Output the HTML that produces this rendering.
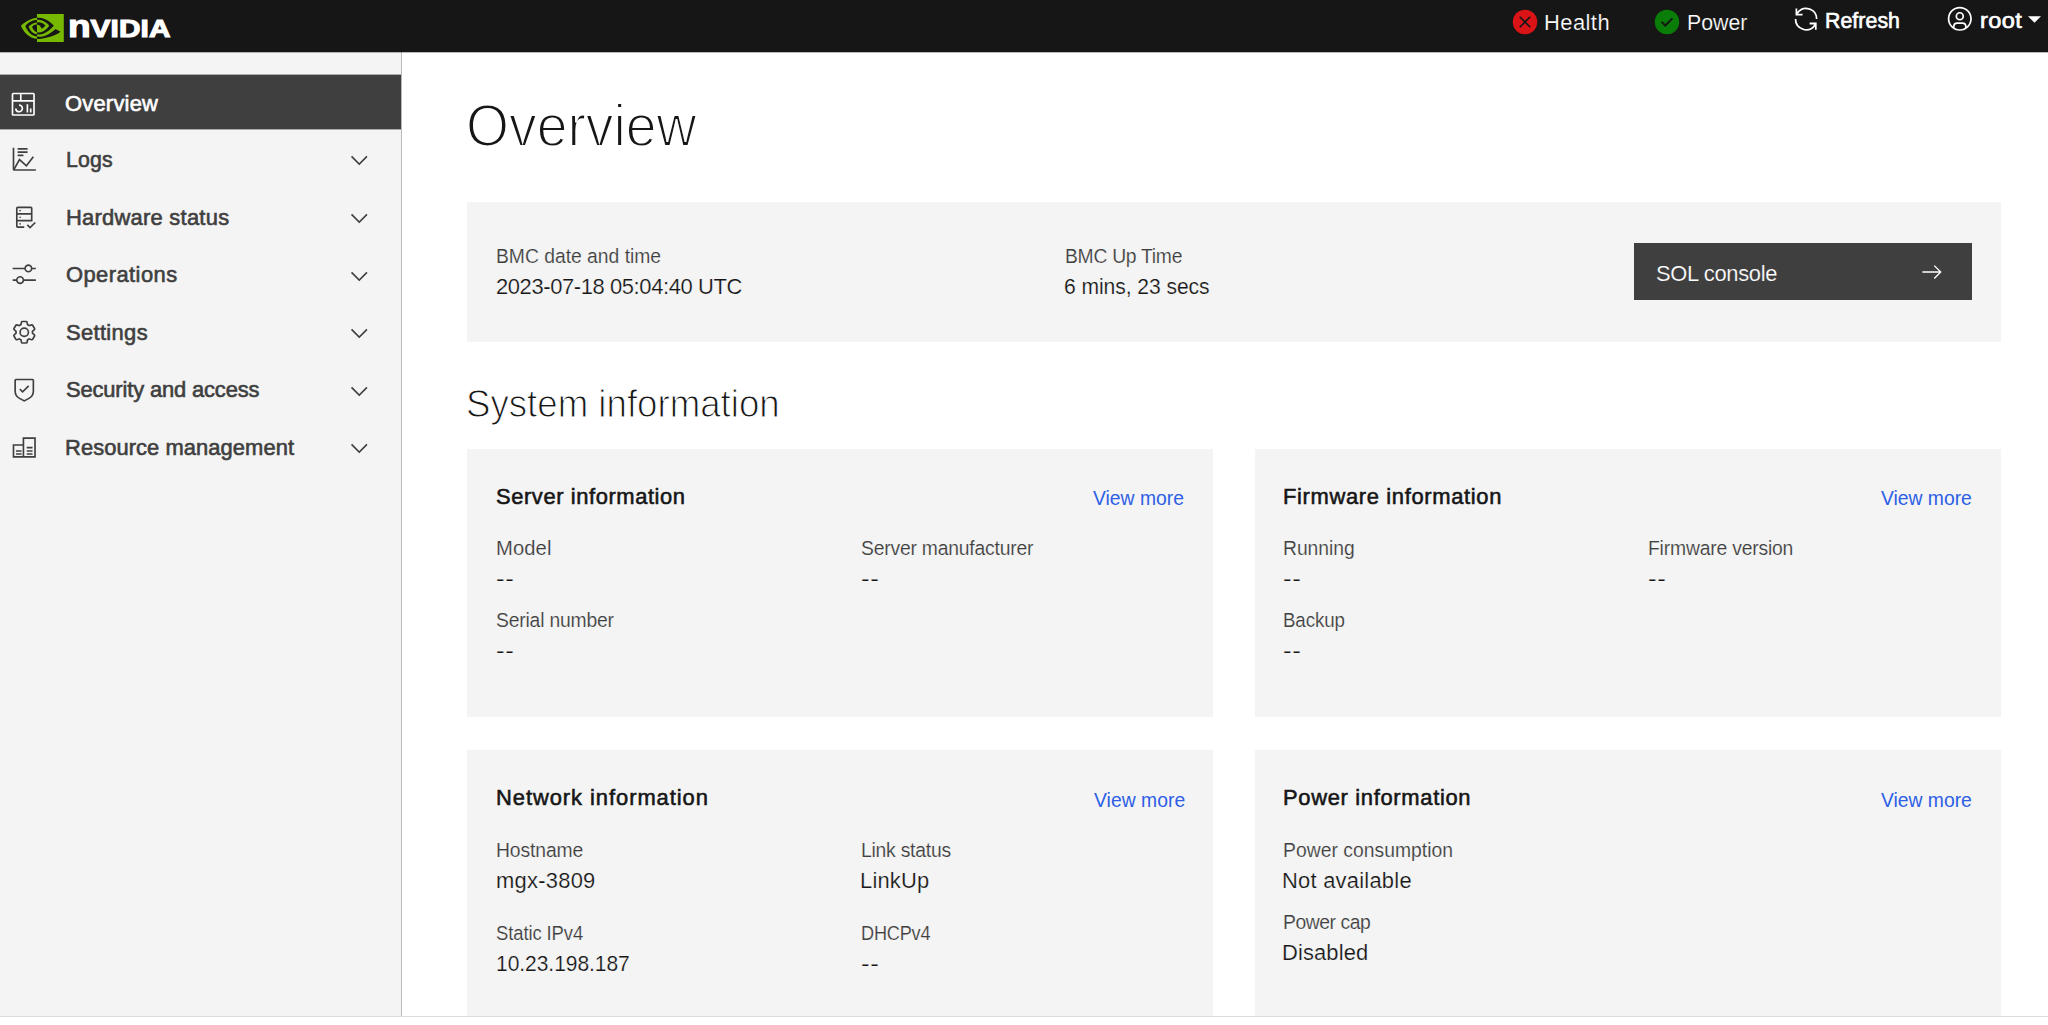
<!DOCTYPE html>
<html lang="en">
<head>
<meta charset="utf-8">
<title>Overview</title>
<style>
*{box-sizing:border-box;margin:0;padding:0}
html,body{width:2048px;height:1025px;overflow:hidden;background:#fff}
body{font-family:"Liberation Sans",sans-serif;color:#161616;font-size:21.2px;position:relative}
a{text-decoration:none;color:inherit}
ul{list-style:none}
h1,h2,h3,dt,dd{font-weight:normal}
.abs,.t{position:absolute;white-space:nowrap;line-height:1;transform-origin:0 0}
svg{display:block;position:absolute;overflow:visible}
#hdr{position:absolute;left:0;top:0;width:2048px;height:52px;background:#161616;color:#fff;z-index:1;box-shadow:0 1px 0 rgba(22,22,22,.3)}
#nav{position:absolute;left:0;top:52px;width:402px;height:964px;background:#f4f4f4;border-right:1px solid #b8b8b8}
#nav li{position:absolute;left:0;width:401px;height:54px;color:#3f3f3f}
#nav li.on{background:#3f3f3f;color:#fff;box-shadow:0 -1px 0 rgba(63,63,63,.4),0 1px 0 rgba(63,63,63,.4)}
#nav li svg.ic{width:26.5px;height:26.5px;fill:currentColor}
#nav li svg.ch{left:345.8px;width:26.5px;height:26.5px;fill:currentColor}
#main{position:absolute;left:402px;top:52px;width:1646px;height:964px;background:#fff}
.card{position:absolute;background:#f4f4f4}
#sol_btn{background:#3f3f3f;color:#fff}
#foot{position:absolute;left:0;top:1016px;width:2048px;height:9px;background:#fff;border-top:1px solid #dcdcdc}
#brand{left:67.6px;top:13.5px;font-size:24.6px;line-height:30px;font-weight:bold;color:#fff;-webkit-text-stroke:1.1px #fff;transform:scaleX(1.21);letter-spacing:0.1px}
.bn{display:inline-block;font-size:32px;line-height:0;transform:scaleX(.96);transform-origin:0 0;margin-right:-1px}
.k-body{font-size:21.5px;line-height:26px;color:#161616;-webkit-text-stroke:0.2px #f4f4f4;transform:scaleX(1.02)}
.k-lbl{font-size:19.5px;line-height:24px;color:#3f3f3f;-webkit-text-stroke:0.15px #f4f4f4;transform:scaleX(0.99)}
.k-nav{font-size:21.5px;line-height:26px;color:#3f3f3f;-webkit-text-stroke:0.6px #3f3f3f;transform:scaleX(1.02)}
.k-navon{font-size:21.5px;line-height:26px;color:#ffffff;-webkit-text-stroke:0.6px #ffffff;transform:scaleX(1.02)}
.k-hdr{font-size:21.5px;line-height:26px;color:#ffffff;-webkit-text-stroke:0.2px #161616;transform:scaleX(1.02)}
.k-hdrb{font-size:21.5px;line-height:26px;color:#ffffff;-webkit-text-stroke:0.65px #ffffff;transform:scaleX(1.02)}
.k-ttl{font-size:21.5px;line-height:26px;color:#161616;-webkit-text-stroke:0.55px #161616;transform:scaleX(1.02)}
.k-lnk{font-size:19.5px;line-height:24px;color:#2d60e5;transform:scaleX(0.99)}
.k-h1{font-size:60px;line-height:69px;color:#161616;-webkit-text-stroke:1.9px #ffffff}
.k-h2{font-size:39.3px;line-height:46px;color:#161616;-webkit-text-stroke:1.05px #ffffff}
.k-dash{font-size:21.5px;line-height:26px;color:#161616;-webkit-text-stroke:0.25px #f4f4f4;transform:scaleX(1.2)}
.k-sol{font-size:21.5px;line-height:26px;color:#ffffff;-webkit-text-stroke:0.2px #3f3f3f;transform:scaleX(1.02)}
</style>
</head>
<body>

<header id="hdr">
  <svg id="logo" viewBox="0 4.063 24 15.874" style="left:20.8px;top:13.7px;width:42.8px;height:28.1px" preserveAspectRatio="none"><path fill="#76b900" d="M8.948 8.798v-1.43a6.7 6.7 0 0 1 .424-.018c3.922-.124 6.493 3.374 6.493 3.374s-2.774 3.851-5.75 3.851c-.398 0-.787-.062-1.158-.185v-4.346c1.528.185 1.837.857 2.747 2.385l2.04-1.714s-1.492-1.952-4-1.952a6.016 6.016 0 0 0-.796.035m0-4.735v2.138l.424-.027c5.45-.185 9.01 4.47 9.01 4.47s-4.08 4.964-8.33 4.964c-.37 0-.733-.035-1.095-.097v1.325c.3.035.61.062.91.062 3.957 0 6.82-2.023 9.593-4.408.459.371 2.34 1.263 2.73 1.652-2.633 2.208-8.772 3.984-12.253 3.984-.335 0-.653-.018-.971-.053v1.864H24V4.063zm0 10.326v1.131c-3.657-.654-4.673-4.46-4.673-4.46s1.758-1.944 4.673-2.262v1.237H8.94c-1.528-.186-2.73 1.245-2.73 1.245s.68 2.412 2.739 3.11M2.456 10.9s2.164-3.197 6.5-3.533V6.201C4.153 6.59 0 10.653 0 10.653s2.35 6.802 8.948 7.42v-1.237c-4.84-.6-6.492-5.936-6.492-5.936z"/></svg>
  <span id="brand" class="t" aria-label="NVIDIA"><span class="bn">n</span>VIDIA</span>
  <svg viewBox="0 0 32 32" style="left:1511.3px;top:7.5px;width:28px;height:28px"><circle cx="16" cy="16" r="14" fill="#da1416"/><path d="M10 10l12 12M22 10L10 22" fill="none" stroke="#161616" stroke-width="1.900"/></svg>
  <span id="health" class="t k-hdr" style="left:1544.27px;top:10px;letter-spacing:0.43px">Health</span>
  <svg viewBox="0 0 32 32" style="left:1653.3px;top:7.5px;width:28px;height:28px"><circle cx="16" cy="16" r="13" fill="#161616"/><path fill="#0a7d08" d="M16 2a14 14 0 1014 14A14 14 0 0016 2zm-2 19.590l-5-5L10.590 15 14 18.410 21.410 11l1.596 1.586z"/></svg>
  <span id="power" class="t k-hdr" style="left:1687.04px;top:10px;letter-spacing:-0.02px;transform:scaleX(0.9934)">Power</span>
  <svg viewBox="0 0 32 32" style="left:1792.1px;top:5px;width:28.2px;height:28.2px" fill="#fff"><path d="M12 10H6.780A11 11 0 0127 16h2A13 13 0 006 7.680V4H4v8h8zM20 22h5.220A11 11 0 015 16H3a13 13 0 0023 8.320V28h2v-8h-8z"/></svg>
  <span id="refresh" class="t k-hdrb" style="left:1825.33px;top:8px;letter-spacing:0.06px;transform:scaleX(0.9906)">Refresh</span>
  <svg viewBox="0 0 32 32" style="left:1945.7px;top:5.1px;width:27.6px;height:27.6px" fill="#fff"><path d="M16 8a5 5 0 105 5 5 5 0 00-5-5zm0 8a3 3 0 113-3 3.003 3.003 0 01-3 3z"/><path d="M16 2a14 14 0 1014 14A14.016 14.016 0 0016 2zm-6 24.377V25a3.003 3.003 0 013-3h6a3.003 3.003 0 013 3v1.377a11.899 11.899 0 01-12 0zm13.992-1.451A5.002 5.002 0 0019 20h-6a5.002 5.002 0 00-4.992 4.926 12 12 0 1115.985 0z"/></svg>
  <span id="root" class="t k-hdrb" style="left:1979.68px;top:8px;letter-spacing:0.38px;transform:scaleX(1.0946)">root</span>
  <svg viewBox="0 0 12 6" style="left:2027.7px;top:16.2px;width:13px;height:6.8px" fill="#fff"><path d="M0 0h12L6 6z"/></svg>
</header>

<nav id="nav">
  <ul>
    <li class="on" style="top:23px">
      <svg class="ic" style="left:9.95px;top:15.60px" viewBox="0 0 32 32"><path d="M24 21h2v5h-2zM20 16h2v10h-2zM11 26a5.006 5.006 0 01-5-5h2a3 3 0 103-3v-2a5 5 0 010 10z"/><path d="M28 2H4a2.002 2.002 0 00-2 2v24a2.002 2.002 0 002 2h24a2.003 2.003 0 002-2V4a2.002 2.002 0 00-2-2zm0 9H14V4h14zM12 4v7H4V4zM4 28V13h24.001l.001 15z"/></svg>
      <a id="n0" class="t k-navon" style="left:64.54px;top:16px;letter-spacing:0.21px">Overview</a>
    </li>
    <li style="top:80px">
      <svg class="ic" style="left:11.25px;top:14.15px" viewBox="0 0 32 32"><path d="M4 2H2v26a2 2 0 002 2h26v-2H4z"/><path d="M8 2.400h12v2H8zM8 6.400h12v2H8zM8 10.400h7v2H8z"/><path fill="none" stroke="currentColor" stroke-width="2" d="M3.500 28.500L10.200 16.400l8.400 7.600L27 13"/></svg>
      <a id="n1" class="t k-nav" style="left:66.31px;top:15px;letter-spacing:0.16px;transform:scaleX(0.99)">Logs</a>
      <svg class="ch" style="top:15.40px" viewBox="0 0 32 32"><path d="M16 22L6 12l1.400-1.400 8.600 8.600 8.600-8.600L26 12z"/></svg>
    </li>
    <li style="top:138px">
      <svg class="ic" style="left:11.25px;top:13.75px" viewBox="0 0 32 32"><path d="M23 27.180l-2.590-2.590L19 26l4 4 7-7-1.410-1.410L23 27.180z"/><circle cx="11" cy="8" r="1"/><circle cx="11" cy="16" r="1"/><circle cx="11" cy="24" r="1"/><path d="M24 3H8a2 2 0 00-2 2v22a2 2 0 002 2h8v-2H8v-6h18V5a2 2 0 00-2-2zm0 16H8v-6h16zm0-8H8V5h16z"/></svg>
      <a id="n2" class="t k-nav" style="left:65.92px;top:15px;letter-spacing:0.24px">Hardware status</a>
      <svg class="ch" style="top:15.00px" viewBox="0 0 32 32"><path d="M16 22L6 12l1.400-1.400 8.600 8.600 8.600-8.600L26 12z"/></svg>
    </li>
    <li style="top:195px">
      <svg class="ic" style="left:11.25px;top:14.35px" viewBox="0 0 32 32"><path d="M30 8h-4.100c-.5-2.300-2.500-4-4.900-4s-4.400 1.700-4.900 4H2v2h14.100c.5 2.300 2.500 4 4.900 4s4.400-1.700 4.900-4H30V8zm-9 4c-1.700 0-3-1.300-3-3s1.300-3 3-3 3 1.300 3 3-1.300 3-3 3zM2 24h4.100c.5 2.300 2.500 4 4.900 4s4.400-1.700 4.900-4H30v-2H15.900c-.5-2.300-2.500-4-4.900-4s-4.400 1.700-4.900 4H2v2zm9-4c1.700 0 3 1.300 3 3s-1.300 3-3 3-3-1.300-3-3 1.300-3 3-3z"/></svg>
      <a id="n3" class="t k-nav" style="left:66.13px;top:15px;letter-spacing:0.42px">Operations</a>
      <svg class="ch" style="top:15.60px" viewBox="0 0 32 32"><path d="M16 22L6 12l1.400-1.400 8.600 8.600 8.600-8.600L26 12z"/></svg>
    </li>
    <li style="top:253px">
      <svg class="ic" style="left:11.25px;top:13.95px" viewBox="0 0 32 32"><path d="M27 16.760c0-.25 0-.5 0-.76s0-.51 0-.77l1.920-1.680A2 2 0 0029.300 11l-2.360-4a2 2 0 00-1.730-1 2 2 0 00-.64.100l-2.430.82a11.350 11.350 0 00-1.310-.75l-.51-2.520a2 2 0 00-2-1.610h-4.680a2 2 0 00-2 1.610l-.51 2.520a11.480 11.480 0 00-1.320.75l-2.380-.86A2 2 0 006.790 6a2 2 0 00-1.730 1L2.700 11a2 2 0 00.41 2.510L5 15.240c0 .25 0 .5 0 .76s0 .51 0 .77l-1.890 1.680A2 2 0 002.700 21l2.360 4a2 2 0 001.730 1 2 2 0 00.64-.1l2.430-.82a11.350 11.350 0 001.310.75l.51 2.520a2 2 0 002 1.610h4.720a2 2 0 002-1.610l.51-2.520a11.480 11.480 0 001.320-.75l2.420.82a2 2 0 00.64.100 2 2 0 001.730-1l2.280-4a2 2 0 00-.41-2.510zM25.210 24l-3.430-1.160a8.860 8.860 0 01-2.710 1.570L18.360 28h-4.720l-.71-3.550a9.360 9.360 0 01-2.700-1.570L6.790 24l-2.360-4 2.720-2.400a8.900 8.900 0 010-3.130L4.430 12l2.360-4 3.430 1.160a8.860 8.860 0 012.710-1.570L13.640 4h4.720l.71 3.550a9.360 9.360 0 012.700 1.570L25.210 8l2.360 4-2.720 2.400a8.900 8.900 0 010 3.130L27.570 20z"/><path d="M16 22a6 6 0 116-6 5.940 5.940 0 01-6 6zm0-10a3.910 3.910 0 00-4 4 3.910 3.910 0 004 4 3.910 3.910 0 004-4 3.910 3.910 0 00-4-4z"/></svg>
      <a id="n4" class="t k-nav" style="left:66.11px;top:15px;letter-spacing:0.33px">Settings</a>
      <svg class="ch" style="top:15.20px" viewBox="0 0 32 32"><path d="M16 22L6 12l1.400-1.400 8.600 8.600 8.600-8.600L26 12z"/></svg>
    </li>
    <li style="top:311px">
      <svg class="ic" style="left:11.25px;top:13.55px" viewBox="0 0 32 32"><path d="M14 16.590L11.410 14 10 15.410l4 4 8-8L20.590 10 14 16.590z"/><path d="M16 30l-6.176-3.293A10.982 10.982 0 014 17V4a2.002 2.002 0 012-2h20a2.002 2.002 0 012 2v13a10.982 10.982 0 01-5.824 9.707zM6 4v13a8.985 8.985 0 004.766 7.942L16 27.733l5.234-2.790A8.985 8.985 0 0026 17V4z"/></svg>
      <a id="n5" class="t k-nav" style="left:66.11px;top:14px;letter-spacing:-0.15px">Security and access</a>
      <svg class="ch" style="top:14.80px" viewBox="0 0 32 32"><path d="M16 22L6 12l1.400-1.400 8.600 8.600 8.600-8.600L26 12z"/></svg>
    </li>
    <li style="top:368px">
      <svg class="ic" style="left:11.25px;top:14.15px" viewBox="0 0 32 32"><path fill="none" stroke="currentColor" stroke-width="2" d="M15 27.600V5h14v22.600zM15 13.300H3v14.300h12"/><path d="M6 19.500h6.800v2H6zM6 23.200h6.800v2H6zM19 15.500h7v2h-7zM19 19.500h7v2h-7zM19 23.200h7v2h-7z"/></svg>
      <a id="n6" class="t k-nav" style="left:65.09px;top:15px;letter-spacing:0.06px">Resource management</a>
      <svg class="ch" style="top:15.40px" viewBox="0 0 32 32"><path d="M16 22L6 12l1.400-1.400 8.600 8.600 8.600-8.600L26 12z"/></svg>
    </li>
  </ul>
</nav>

<main id="main">
  <h1 id="h1" class="t k-h1" style="left:64.47px;top:39px;transform:scaleX(0.9214)">Overview</h1>
  <section class="card" id="c_top" style="left:65px;top:150px;width:1533.5px;height:139.7px">
    <dl>
      <dt id="bl1" class="t k-lbl" style="left:28.89px;top:42px;letter-spacing:-0.01px">BMC date and time</dt>
      <dd id="bv1" class="t k-body" style="left:28.59px;top:72px;letter-spacing:-0.38px">2023-07-18 05:04:40 UTC</dd>
      <dt id="bl2" class="t k-lbl" style="left:597.89px;top:42px;letter-spacing:-0.28px">BMC Up Time</dt>
      <dd id="bv2" class="t k-body" style="left:597.03px;top:72px;letter-spacing:-0.07px;transform:scaleX(0.9811)">6 mins, 23 secs</dd>
    </dl>
    <a id="sol_btn" class="abs" style="left:1167px;top:41px;width:338px;height:57.2px">
      <span id="sol" class="t k-sol" style="left:21.94px;top:18px;letter-spacing:-0.32px">SOL console</span>
      <svg id="arrow" viewBox="0 0 16 16" style="left:286.8px;top:17.8px;width:22px;height:22px" fill="#fff"><path d="M9.300 3.700L13.100 7.500H1v1h12.100l-3.800 3.800.7.700 5-5-5-5z"/></svg>
    </a>
  </section>
  <h2 id="h2" class="t k-h2" style="left:64.34px;top:328px;transform:scaleX(0.9326)">System information</h2>
  <section class="card" id="c_s" style="left:65px;top:397px;width:745.7px;height:267.7px">
    <h3 id="s_t" class="t k-ttl" style="left:28.77px;top:35px;letter-spacing:0.57px;transform:scaleX(1.)">Server information</h3>
    <a id="s_k" class="t k-lnk" style="left:625.72px;top:37px;letter-spacing:0.02px">View more</a>
    <dl>
      <dt id="s_l1" class="t k-lbl" style="left:29.32px;top:87px;letter-spacing:0.1px;transform:scaleX(1.0348)">Model</dt>
      <dd id="s_v1" class="t k-dash" style="left:28.68px;top:117px;letter-spacing:0.54px">--</dd>
      <dt id="s_l2" class="t k-lbl" style="left:394.41px;top:87px;letter-spacing:-0.2px">Server manufacturer</dt>
      <dd id="s_v2" class="t k-dash" style="left:393.68px;top:117px;letter-spacing:0.58px">--</dd>
      <dt id="s_l3" class="t k-lbl" style="left:28.83px;top:159px;letter-spacing:-0.18px">Serial number</dt>
      <dd id="s_v3" class="t k-dash" style="left:28.68px;top:189px;letter-spacing:0.54px">--</dd>
    </dl>
  </section>
  <section class="card" id="c_f" style="left:853px;top:397px;width:745.5px;height:267.7px">
    <h3 id="f_t" class="t k-ttl" style="left:27.82px;top:35px;letter-spacing:0.64px;transform:scaleX(1.)">Firmware information</h3>
    <a id="f_k" class="t k-lnk" style="left:625.55px;top:37px">View more</a>
    <dl>
      <dt id="f_l1" class="t k-lbl" style="left:27.94px;top:87px;letter-spacing:-0.04px">Running</dt>
      <dd id="f_v1" class="t k-dash" style="left:27.82px;top:117px;letter-spacing:0.57px">--</dd>
      <dt id="f_l2" class="t k-lbl" style="left:393.17px;top:87px;letter-spacing:-0.18px">Firmware version</dt>
      <dd id="f_v2" class="t k-dash" style="left:392.74px;top:117px;letter-spacing:0.51px">--</dd>
      <dt id="f_l3" class="t k-lbl" style="left:27.95px;top:159px;letter-spacing:-0.13px;transform:scaleX(0.9603)">Backup</dt>
      <dd id="f_v3" class="t k-dash" style="left:27.82px;top:189px;letter-spacing:0.57px">--</dd>
    </dl>
  </section>
  <section class="card" id="c_n" style="left:65px;top:698px;width:745.7px;height:266px">
    <h3 id="n_t" class="t k-ttl" style="left:28.58px;top:35px;letter-spacing:0.92px;transform:scaleX(1.)">Network information</h3>
    <a id="n_k" class="t k-lnk" style="left:627.03px;top:38px;letter-spacing:0.04px">View more</a>
    <dl>
      <dt id="n_l1" class="t k-lbl" style="left:29.35px;top:88px;letter-spacing:-0.11px">Hostname</dt>
      <dd id="n_v1" class="t k-body" style="left:28.74px;top:118px;letter-spacing:0.25px">mgx-3809</dd>
      <dt id="n_l2" class="t k-lbl" style="left:394.2px;top:88px;letter-spacing:-0.22px">Link status</dt>
      <dd id="n_v2" class="t k-body" style="left:392.64px;top:118px;letter-spacing:0.18px">LinkUp</dd>
      <dt id="n_l3" class="t k-lbl" style="left:28.91px;top:171px;letter-spacing:-0.1px;transform:scaleX(0.9453)">Static IPv4</dt>
      <dd id="n_v3" class="t k-body" style="left:28.99px;top:201px;letter-spacing:-0.04px;transform:scaleX(0.9764)">10.23.198.187</dd>
      <dt id="n_l4" class="t k-lbl" style="left:393.7px;top:171px;letter-spacing:-0.2px;transform:scaleX(0.9295)">DHCPv4</dt>
      <dd id="n_v4" class="t k-dash" style="left:394.27px;top:201px;letter-spacing:0.53px">--</dd>
    </dl>
  </section>
  <section class="card" id="c_p" style="left:853px;top:698px;width:745.5px;height:266px">
    <h3 id="p_t" class="t k-ttl" style="left:27.89px;top:35px;letter-spacing:0.66px;transform:scaleX(1.)">Power information</h3>
    <a id="p_k" class="t k-lnk" style="left:625.55px;top:38px">View more</a>
    <dl>
      <dt id="p_l1" class="t k-lbl" style="left:28.26px;top:88px;letter-spacing:0.03px">Power consumption</dt>
      <dd id="p_v1" class="t k-body" style="left:27.15px;top:118px;letter-spacing:0.23px">Not available</dd>
      <dt id="p_l2" class="t k-lbl" style="left:28.26px;top:160px;letter-spacing:-0.43px">Power cap</dt>
      <dd id="p_v2" class="t k-body" style="left:27.15px;top:190px;letter-spacing:0.12px">Disabled</dd>
    </dl>
  </section>
</main>

<div id="foot"></div>
</body>
</html>
